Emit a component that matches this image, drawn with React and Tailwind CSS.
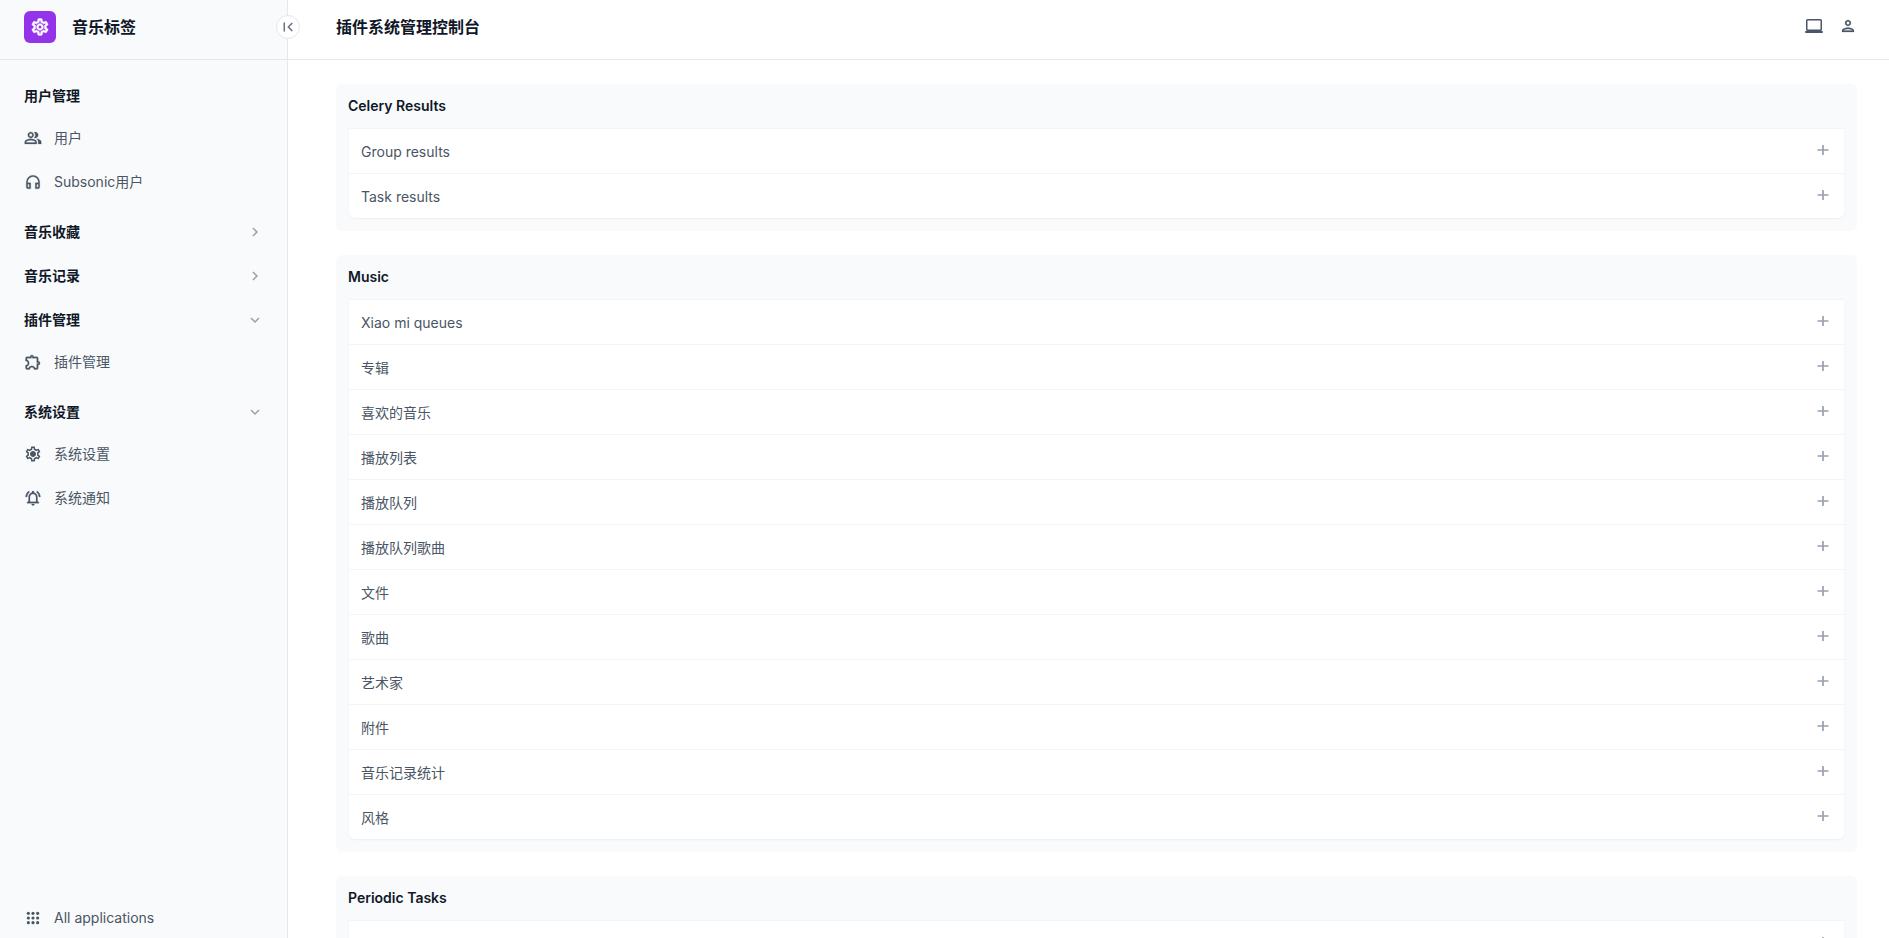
import { useState } from "react";
import {
  MdChevronRight,
  MdExpandMore,
  MdFirstPage,
  MdOutlineExtension,
  MdOutlineHeadphones,
  MdOutlineNotificationsActive,
  MdOutlinePeopleAlt,
  MdOutlinePerson,
  MdOutlineSettings,
} from "react-icons/md";

function AppsIcon({ className }) {
  const steps = [5.8, 12, 18.2];
  return (
    <svg viewBox="0 0 24 24" fill="currentColor" className={className} aria-hidden="true">
      {steps.map((y) => steps.map((x) => <circle key={`${x}-${y}`} cx={x} cy={y} r="2.1" />))}
    </svg>
  );
}

function ComputerIcon({ className }) {
  return (
    <svg viewBox="0 0 18 18" fill="none" className={className} aria-hidden="true">
      <rect x="1.75" y="2.75" width="14.5" height="10.5" rx="0.8" stroke="currentColor" strokeWidth="1.5" />
      <rect x="0.25" y="14" width="17.5" height="2" fill="currentColor" />
    </svg>
  );
}

function PlusIcon({ className }) {
  return (
    <svg viewBox="0 0 18 18" fill="none" className={className} aria-hidden="true">
      <path d="M3.5 9h11M9 4v10" stroke="currentColor" strokeWidth="1.7" />
    </svg>
  );
}

function GearIcon({ className }) {
  return (
    <svg viewBox="0 0 24 24" fill="currentColor" className={className} aria-hidden="true">
      <MdOutlineSettings size={24} />
      <circle cx="12" cy="12" r="3" stroke="none" />
    </svg>
  );
}

const sections = [
  {
    title: "用户管理",
    items: [
      { label: "用户", icon: MdOutlinePeopleAlt },
      { label: "Subsonic用户", icon: MdOutlineHeadphones },
    ],
  },
  { title: "音乐收藏", collapsible: true, closed: true, items: [] },
  { title: "音乐记录", collapsible: true, closed: true, items: [] },
  {
    title: "插件管理",
    collapsible: true,
    items: [{ label: "插件管理", icon: MdOutlineExtension }],
  },
  {
    title: "系统设置",
    collapsible: true,
    items: [
      { label: "系统设置", icon: GearIcon },
      { label: "系统通知", icon: MdOutlineNotificationsActive },
    ],
  },
];

const apps = [
  { name: "Celery Results", models: ["Group results", "Task results"] },
  {
    name: "Music",
    models: [
      "Xiao mi queues",
      "专辑",
      "喜欢的音乐",
      "播放列表",
      "播放队列",
      "播放队列歌曲",
      "文件",
      "歌曲",
      "艺术家",
      "附件",
      "音乐记录统计",
      "风格",
    ],
  },
  { name: "Periodic Tasks", models: ["Clockeds"] },
];

function NavSection({ title, collapsible, closed, items }) {
  const [open, setOpen] = useState(!closed);
  const Chevron = open ? MdExpandMore : MdChevronRight;

  return (
    <section>
      <h2 className="font-semibold text-gray-900">
        {collapsible ? (
          <button
            type="button"
            aria-expanded={open}
            onClick={() => setOpen(!open)}
            className="flex h-9 w-full cursor-pointer items-center justify-between"
          >
            {title}
            <Chevron className="size-[18px] text-gray-400" />
          </button>
        ) : (
          <span className="flex h-9 items-center">{title}</span>
        )}
      </h2>
      {open && items.length > 0 && (
        <ul className="py-0.5">
          {items.map(({ label, icon: Icon }) => (
            <li key={label}>
              <a href="#" className="flex h-11 items-center gap-3 hover:text-purple-600">
                <Icon className="size-[18px] shrink-0 stroke-current stroke-[0.3] [&_[fill=none]]:stroke-none" />
                {label}
              </a>
            </li>
          ))}
        </ul>
      )}
    </section>
  );
}

function Sidebar() {
  return (
    <aside className="relative flex w-72 shrink-0 flex-col border-r border-gray-200 bg-gray-50">
      <div className="flex h-15 shrink-0 items-center gap-4 border-b border-gray-200 px-6 pb-[5px]">
        <span className="flex size-8 items-center justify-center rounded-md bg-[#9333ea] text-white">
          <MdOutlineSettings className="size-5 stroke-current stroke-[0.7] [&_[fill=none]]:stroke-none" />
        </span>
        <a href="#" className="text-base font-semibold text-gray-900">
          音乐标签
        </a>
      </div>
      <button
        type="button"
        aria-label="Toggle sidebar"
        className="absolute top-[15px] -right-[13px] flex size-6 cursor-pointer items-center justify-center rounded-full border border-gray-200 bg-white text-gray-500"
      >
        <MdFirstPage className="size-[18px]" />
      </button>
      <nav className="flex min-h-0 grow flex-col gap-2 overflow-hidden py-[18px] pr-[23px] pl-6">
        {sections.map((section) => (
          <NavSection key={section.title} {...section} />
        ))}
      </nav>
      <a href="#" className="flex h-10 shrink-0 items-center gap-3 px-6">
        <AppsIcon className="size-[18px]" />
        All applications
      </a>
    </aside>
  );
}

function AppCard({ name, models }) {
  return (
    <section className="rounded-md bg-gray-50 px-3 pb-3">
      <h2 className="flex h-11 items-center font-semibold text-gray-900">{name}</h2>
      <div className="px-px pb-px">
        <table className="block w-full rounded-b-md bg-white shadow-xs">
          <tbody className="block">
            {models.map((model) => (
              <tr
                key={model}
                className="flex h-[45px] items-center justify-between border-t border-gray-100 px-3"
              >
                <th scope="row" className="pt-px text-left font-normal">
                  <a href="#" className="hover:text-purple-600">
                    {model}
                  </a>
                </th>
                <td className="pb-0.5">
                  <a href="#" aria-label={`Add ${model}`} className="block text-gray-400">
                    <PlusIcon className="size-[18px]" />
                  </a>
                </td>
              </tr>
            ))}
          </tbody>
        </table>
      </div>
    </section>
  );
}

export default function App() {
  return (
    <div className="flex h-screen overflow-hidden bg-white font-['Inter','Noto_Sans_CJK_SC',sans-serif] text-sm text-gray-600">
      <Sidebar />
      <div className="flex min-w-0 grow flex-col">
        <header className="flex h-15 shrink-0 items-center justify-between border-b border-gray-200 pr-8 pb-[5px] pl-12">
          <h1 className="text-base font-semibold text-gray-900">插件系统管理控制台</h1>
          <div className="flex items-center gap-4 pb-0.5">
            <button type="button" aria-label="Theme" className="cursor-pointer">
              <ComputerIcon className="size-[18px]" />
            </button>
            <button type="button" aria-label="Account" className="cursor-pointer">
              <MdOutlinePerson className="size-[18px] stroke-current stroke-[0.3] [&_[fill=none]]:stroke-none" />
            </button>
          </div>
        </header>
        <main className="flex min-h-0 grow flex-col gap-6 overflow-hidden pt-6 pr-8 pl-12 *:shrink-0">
          {apps.map((app) => (
            <AppCard key={app.name} {...app} />
          ))}
        </main>
      </div>
    </div>
  );
}
